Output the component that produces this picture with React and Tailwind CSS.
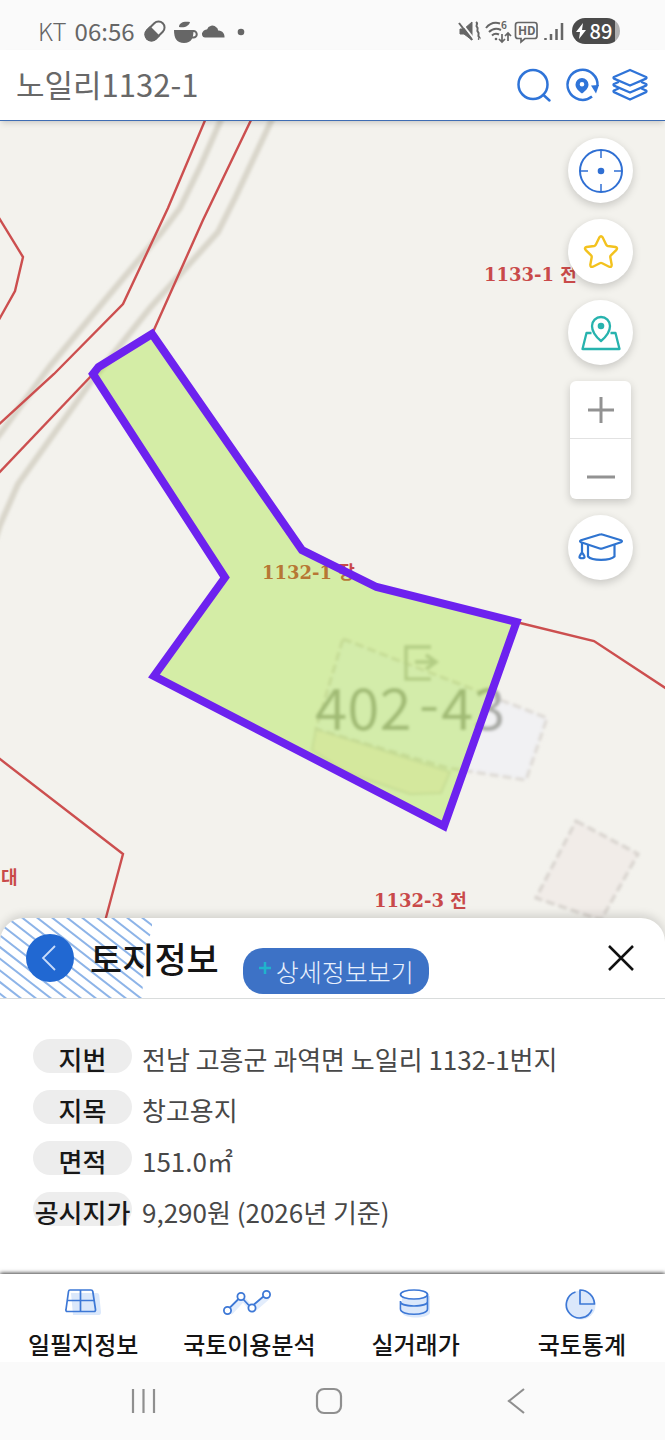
import React from "react";

const LAND_INFO = [
  { label: "지번", value: "전남 고흥군 과역면 노일리 1132-1번지" },
  { label: "지목", value: "창고용지" },
  { label: "면적", value: "151.0㎡" },
  { label: "공시지가", value: "9,290원 (2026년 기준)" },
];

const STRIPES = Array.from({ length: 17 }, (_, i) => -100 + i * 15);

function StatusBar() {
  return (
    <div className="flex h-[50px] items-end justify-between bg-[#fafafa] pr-[45px] pb-px pl-[38px] text-[#666]">
      <div className="flex h-9 items-center gap-2 text-2xl leading-9">
        <span className="font-light">KT</span>
        <span className="font-normal">06:56</span>
        <svg viewBox="0 0 106 26" className="h-[26px] w-[106px]" fill="none" aria-hidden="true">
          <g transform="rotate(-45 12 13)">
            <rect x="1" y="7" width="22" height="12" rx="6" stroke="currentColor" strokeWidth="2" />
            <path d="M12 6H7a7 7 0 0 0 0 14h5z" fill="currentColor" />
          </g>
          <path d="M31 12h19.500c0 8-2 13-9.500 13s-10-5-10-13z" fill="currentColor" />
          <path d="M48 13h2.500a2.500 2.500 0 0 1 0 6.500H46" stroke="currentColor" strokeWidth="2" />
          <path d="M36 9c0-4 4-6 11-5-1 4-5 6-11 5z" fill="currentColor" />
          <path d="M62 19.500a3.500 3.500 0 0 1-2-6c1-1.500 3-2 4-2a5.500 5.500 0 0 1 9.500-2c1 .5 1.500 2 1.500 3 4-.5 7 3.500 6.500 7z" fill="currentColor" />
          <circle cx="98" cy="14" r="3.300" fill="currentColor" />
        </svg>
      </div>
      <div className="flex h-9 items-center gap-2">
        <svg viewBox="0 0 106 26" className="h-[26px] w-[106px]" fill="none" stroke="currentColor" strokeWidth="2" aria-hidden="true">
          <path d="M2 11h4l8-7v18l-8-6H2z" fill="currentColor" strokeWidth="1" />
          <path d="M2 3l14 18" stroke="#fafafa" strokeWidth="2" />
          <path d="M1 5l13 17" />
          <path d="M18 4c3 2-1 3 1 5s-1 3 1 5-1 3 1 5-1 2 0 2" />
          <path d="M28 10c4-5 9-6 14-4.500M31 14c4-4 8-4 12-2M34 17.500c2-2 5-2 7-1" />
          <circle cx="38" cy="21" r="1.300" fill="currentColor" stroke="none" />
          <path d="M44 16v8m-3-3 3 3 3-3M50 23v-8m-3 3 3-3 3 3" strokeWidth="1.700" />
          <path d="M60 4.500h16.500q2.500 0 2.500 2.500v11q0 2.500-2.500 2.500H67l-4 3.500v-3.500h-3q-2.500 0-2.500-2.500V7q0-2.500 2.500-2.500z" strokeWidth="1.700" />
          <path d="M87.500 22v-2M93 22v-6M98.500 22V11M104 22V5" strokeWidth="2.500" />
          <text x="43" y="11" fontSize="10" fontWeight="700" fill="currentColor" stroke="none">6</text>
          <text x="60" y="17" fontSize="12" fontWeight="700" fill="currentColor" stroke="none">HD</text>
        </svg>
        <div className="flex h-[26px] w-12 items-center justify-center gap-1 rounded-full bg-[linear-gradient(90deg,#4a4a4a_43px,#b0b0b0_43px)] pr-1 text-xl leading-6 font-medium text-white">
          <svg viewBox="0 0 10 16" className="h-4 w-2.5" fill="currentColor" aria-hidden="true">
            <path d="M7 0L0 9h4l-1 7 7-9H6z" />
          </svg>
          <span>89</span>
        </div>
      </div>
    </div>
  );
}

function SearchBar() {
  return (
    <form className="relative z-10 flex h-[71px] items-center gap-3 border-b border-[#3e6db3] bg-white pr-[17px] pl-4 shadow-md" onSubmit={(e) => e.preventDefault()}>
      <input
        type="text"
        aria-label="주소 검색"
        defaultValue="노일리1132-1"
        className="h-12 min-w-0 flex-1 bg-transparent pb-1 text-[31px] font-normal text-[#686868] outline-none"
      />
      <button type="submit" aria-label="검색" className="text-[#2f74d8]">
        <svg viewBox="0 0 36 36" className="size-9" fill="none" stroke="currentColor" strokeWidth="2.500" strokeLinecap="round">
          <circle cx="17" cy="17.500" r="14.500" />
          <path d="M27.500 28l6 5.500" />
        </svg>
      </button>
      <button type="button" aria-label="위치 새로고침" className="text-[#2f74d8]">
        <svg viewBox="0 0 36 36" className="size-9" fill="none" stroke="currentColor" strokeWidth="2.500">
          <path d="M28 29.500A15 15 0 1 1 33.500 19" />
          <path d="M27 18.500l8-.5-3 8.500z" fill="currentColor" stroke="none" />
          <path fillRule="evenodd" d="M18 26.500c-4-3-6.500-5.500-6.500-9a6.500 6.500 0 0 1 13 0c0 3.500-2.500 6-6.500 9zm0-7a2.300 2.300 0 1 0 0-4.600 2.300 2.300 0 0 0 0 4.600z" fill="currentColor" stroke="none" />
        </svg>
      </button>
      <button type="button" aria-label="지도 레이어" className="text-[#2f74d8]">
        <svg viewBox="0 0 36 36" className="size-9" fill="none" stroke="currentColor" strokeWidth="2.300" strokeLinejoin="round" strokeLinecap="round">
          <path d="M18 3L34 10q1 .8 0 1.600L18 18.500 2 11.600q-1-.8 0-1.600z" />
          <path d="M6 15.200L2 17q-1 .8 0 1.600L18 25.500l16-6.900q1-.8 0-1.600l-4-1.800" />
          <path d="M6 21.700L2 23.500q-1 .8 0 1.600L18 32.500l16-7.400q1-.8 0-1.600l-4-1.800" />
        </svg>
      </button>
    </form>
  );
}

function MapCanvas() {
  return (
    <svg
      viewBox="0 121 665 821"
      preserveAspectRatio="xMidYMin slice"
      className="block h-full w-full"
      role="img"
      aria-label="노일리 1132-1 지적도"
      fill="none"
    >
      <defs>
        <filter id="soft" x="-10%" y="-10%" width="120%" height="120%">
          <feGaussianBlur stdDeviation="1.500" />
        </filter>
      </defs>
      <rect y="100" width="665" height="860" fill="#f3f2ed" />
      <g stroke="#d9d6cb" strokeWidth="6" filter="url(#soft)">
        <path d="M223 115L201 165 180 208 162 232 100 306 50 366 0 434-10 446" />
        <path d="M274 115L236 196 218 232 150 308 93 379 18 484 0 525-5 540" />
      </g>
      <g filter="url(#soft)">
        <path d="M316 729L312 750 345 772 410 794 441 793 450 772z" fill="#f3ebe0" stroke="#dedad2" strokeWidth="2" />
        <path d="M343 639L547 718 526 780 448 768 316 729z" fill="#f1f1f3" stroke="#dcd8d3" strokeWidth="3" strokeDasharray="9 4" />
        <path d="M576 821L638 854 601 920 536 898z" fill="#f1ece8" stroke="#d6d1cc" strokeWidth="3" strokeDasharray="9 4" />
        <path d="M431 647H406V679H431M415 662H436M426 655L436 662 426 669" stroke="#c2c4bc" strokeWidth="3.500" />
        <g fill="#a9aaa6" fontSize="58" fontWeight="400">
          <text x="315" y="730">402</text>
          <text x="419" y="725">-</text>
          <text x="441" y="730">43</text>
        </g>
      </g>
      <g stroke="#cc4f4f" strokeWidth="2.400">
        <path d="M206 118L168 208 123 304 54 374-4 427" />
        <path d="M252 118L203 220 153 332" />
        <path d="M93 374L-4 476" />
        <path d="M-4 213L23 257 15 291-4 325" />
        <path d="M516 622L594 641 670 691" />
        <path d="M-4 756L123 854 104 925" />
      </g>
      <g fill="#c94a4a" fontSize="18" fontWeight="700" className="font-['DejaVu_Serif','Noto_Sans_CJK_KR',serif]">
        <text x="484" y="281">1133-1 전</text>
        <text x="262" y="579">1132-1 장</text>
        <text x="374" y="907">1132-3 전</text>
        <text x="1" y="884">대</text>
      </g>
      <path
        d="M152 334L98.500 367 93 374 225 577.500 154 676 444 826 516.500 622 376.500 587 302 550z"
        fill="#90e103"
        fillOpacity="0.3"
      />
      <path
        d="M152 334L98.500 367 93 374 225 577.500 154 676 444 826 516.500 622 376.500 587 302 550z"
        stroke="#6d22ef"
        strokeWidth="8"
      />
    </svg>
  );
}

function RoundButton({ label, children }) {
  return (
    <button
      type="button"
      aria-label={label}
      className="flex size-[65px] items-center justify-center rounded-full bg-white shadow-[0_3px_8px_rgba(0,0,0,0.18)]"
    >
      {children}
    </button>
  );
}

function MapControls() {
  return (
    <div className="absolute top-[17px] right-8 flex flex-col items-center gap-4">
      <RoundButton label="현재 위치">
        <svg viewBox="0 0 48 48" className="size-12" fill="none" stroke="#2f6fd3" strokeWidth="2">
          <circle cx="24" cy="24" r="21" />
          <path d="M24 3v8M24 37v8M3 24h8M37 24h8" strokeWidth="1.500" />
          <circle cx="24" cy="24" r="3.300" fill="#2f6fd3" stroke="none" />
        </svg>
      </RoundButton>
      <RoundButton label="즐겨찾기">
        <svg viewBox="0 0 36 36" className="size-9" fill="none" stroke="#f3c21e" strokeWidth="2.400" strokeLinejoin="round">
          <path d="M16.300 3.500q1.700-2.500 3.400 0l3.500 7.300q.5 1 1.600 1.200l7.700 1q2.500.7.900 2.800l-5.500 5.600q-.8.800-.6 1.900l1.400 7.500q0 2.800-2.600 1.900l-6.900-3.500q-1.200-.6-2.400 0l-6.900 3.500q-2.600.9-2.600-1.900l1.400-7.500q.2-1.100-.6-1.900l-5.500-5.600q-1.600-2.100.9-2.800l7.700-1q1.100-.2 1.600-1.200z" />
        </svg>
      </RoundButton>
      <RoundButton label="지도 보기">
        <svg viewBox="0 0 42 38" className="h-[38px] w-[42px]" fill="none" stroke="#27b3ae" strokeWidth="2.300" strokeLinejoin="round">
          <path d="M21 27c-6-5-9-10-9-15a9 9 0 0 1 18 0c0 5-3 10-9 15z" />
          <circle cx="21" cy="12" r="3.300" fill="#27b3ae" stroke="none" />
          <path d="M11.500 19H6.500L2.500 35h37l-4-16h-5" />
        </svg>
      </RoundButton>
      <div className="flex h-[118px] w-[61px] flex-col overflow-hidden rounded-md bg-white text-[#929292] shadow-[0_3px_8px_rgba(0,0,0,0.18)]">
        <button type="button" aria-label="확대" className="flex h-[58px] items-center justify-center border-b border-[#e2e2e2]">
          <svg viewBox="0 0 28 28" className="size-7" stroke="currentColor" strokeWidth="3">
            <path d="M14 1v26M1 14h26" />
          </svg>
        </button>
        <button type="button" aria-label="축소" className="flex h-[60px] items-center justify-center pt-4">
          <svg viewBox="0 0 28 28" className="size-7" stroke="currentColor" strokeWidth="3">
            <path d="M0 14h28" />
          </svg>
        </button>
      </div>
      <RoundButton label="도움말">
        <svg viewBox="0 0 48 32" className="h-8 w-12" fill="none" stroke="#2f74d0" strokeWidth="2.200" strokeLinejoin="round">
          <path d="M24 2.500q.6-.3 1.200 0L44 8.200q2 1 0 2L25.200 16.500q-1.200.4-2.400 0L4 10.200q-2-1 0-2L22.800 2.500z" />
          <path d="M11 13v11.500c4 4.500 22 4.500 26.500 0V13" />
          <path d="M5 11v10M5 20.500q-3 4-2.500 5 2.500 1.500 5 0 .5-1-2.500-5z" />
        </svg>
      </RoundButton>
    </div>
  );
}

function LandSheet() {
  return (
    <section className="relative z-10 -mt-6 rounded-t-3xl bg-white shadow-[0_-3px_10px_rgba(0,0,0,0.14)]">
      <header className="relative flex h-[81px] items-center overflow-hidden rounded-t-3xl border-b border-[#d9dcdc] px-[26px]">
        <svg viewBox="0 0 152 80" className="absolute top-0 left-0 h-20 w-[152px]" aria-hidden="true">
          <defs>
            <clipPath id="stripe-area">
              <path d="M0 0H152V14Q144 26 144 50L142 80H0z" />
            </clipPath>
          </defs>
          <g clipPath="url(#stripe-area)" stroke="#8db4e8" strokeWidth="2">
            {STRIPES.map((x) => (
              <path key={x} d={`M${x} -2l108 84`} />
            ))}
          </g>
        </svg>
        <button type="button" aria-label="뒤로" className="relative flex size-12 shrink-0 items-center justify-center rounded-full bg-[#2168d2]">
          <svg viewBox="0 0 20 28" className="h-7 w-5" fill="none" stroke="#c9dcfa" strokeWidth="1.800">
            <path d="M15 2L3 14l12 12" />
          </svg>
        </button>
        <h1 className="relative ml-4 text-[35px] leading-[48px] font-medium whitespace-nowrap text-[#151515]">토지정보</h1>
        <button
          type="button"
          className="mb-1 ml-6 flex h-[46px] w-[186px] shrink-0 items-center justify-center gap-1 self-end rounded-[20px] bg-[#3d72c6] text-[25px] leading-9 font-light whitespace-nowrap text-[#e9f1fd]"
        >
          <svg viewBox="0 0 14 22" className="h-[22px] w-3.5" stroke="#20b4cc" strokeWidth="2.500" aria-hidden="true">
            <path d="M7 2v12M1 8h12" />
          </svg>
          상세정보보기
        </button>
        <button type="button" aria-label="닫기" className="ml-auto flex size-9 items-center justify-center">
          <svg viewBox="0 0 28 28" className="size-7" stroke="#111" strokeWidth="2.500">
            <path d="M2 2l24 24M26 2L2 26" />
          </svg>
        </button>
      </header>
      <dl className="flex flex-col gap-[17px] px-[33px] pt-10 pb-12">
        {LAND_INFO.map(({ label, value }) => (
          <div key={label} className="flex h-[34px] gap-2.5">
            <dt className="flex h-[34px] w-[99px] shrink-0 justify-center rounded-full bg-[#ededed] text-[26px] leading-[40px] font-medium whitespace-nowrap text-[#181818]">
              {label}
            </dt>
            <dd className="text-[26px] leading-[40px] font-normal whitespace-nowrap text-[#484848]">{value}</dd>
          </div>
        ))}
      </dl>
    </section>
  );
}

const TABS = [
  {
    label: "일필지정보",
    icon: (
      <>
        <path d="M14 9h26q2 0 2.200 2L44 28q0 3-2 3H16z" fill="#dbe8fb" />
        <g stroke="#3d78d6" strokeWidth="1.700" strokeLinejoin="round">
          <path d="M13 6h21q1.500 0 1.800 1.500L38.500 25.500q.2 2-1.500 2h-26.500q-2 0-1.500-2l2.500-18Q11.700 6 13 6z" />
          <path d="M23.500 6v21M10.500 16.500h27" />
        </g>
      </>
    ),
  },
  {
    label: "국토이용분석",
    icon: (
      <>
        <path d="M7 29l13-14 10 11 15-13" stroke="#e3edfc" strokeWidth="5" strokeLinejoin="round" />
        <g stroke="#3d78d6" strokeWidth="1.800">
          <path d="M7 23.500l9-9M20 15l6 6.500M31 20.500l10-8.500" />
          <circle cx="4.500" cy="26.500" r="3.600" fill="#fff" />
          <circle cx="18" cy="12.500" r="3.600" fill="#fff" />
          <circle cx="29" cy="24" r="3.600" fill="#fff" />
          <circle cx="43.500" cy="10.500" r="3.600" fill="#fff" />
        </g>
      </>
    ),
  },
  {
    label: "실거래가",
    icon: (
      <>
        <path d="M12 12h28v17c-3 6-25 6-28 0z" fill="#dbe8fb" />
        <g stroke="#3d78d6" strokeWidth="1.700">
          <ellipse cx="24" cy="10.500" rx="13.500" ry="4.500" fill="#fff" />
          <path d="M37.500 10.500V25c0 7-27 7-27 0v-8M10.500 17.500c0 6 27 6 27 0" />
        </g>
      </>
    ),
  },
  {
    label: "국토통계",
    icon: (
      <>
        <circle cx="25" cy="21" r="14.500" fill="#dbe8fb" />
        <g stroke="#3d78d6" strokeWidth="1.700" strokeLinejoin="round">
          <path d="M24 6v14h14.500A14.500 14.500 0 0 0 24 6z" />
          <path d="M19.500 8A13.300 13.300 0 1 0 36 25.500" />
        </g>
      </>
    ),
  },
];

function TabBar() {
  return (
    <nav className="relative z-20 grid h-[88px] grid-cols-4 bg-white shadow-[0_-1px_4px_rgba(0,0,0,0.75)]">
      {TABS.map(({ label, icon }) => (
        <a key={label} href="#" className="flex flex-col items-center gap-1 pt-2.5 text-2xl leading-10 font-medium whitespace-nowrap text-[#141414]">
          <svg viewBox="0 0 52 36" className="h-9 w-[52px]" fill="none" aria-hidden="true">
            {icon}
          </svg>
          {label}
        </a>
      ))}
    </nav>
  );
}

function SystemNav() {
  return (
    <div className="relative z-20 flex h-[78px] items-center justify-between bg-[#fafafa] pr-[136px] pl-[129px] text-[#8f8f8f]">
      <button type="button" aria-label="최근 앱">
        <svg viewBox="0 0 30 28" className="h-7 w-[30px]" stroke="currentColor" strokeWidth="2.200">
          <path d="M4 2v24M14.500 2v24M25 2v24" />
        </svg>
      </button>
      <button type="button" aria-label="홈">
        <svg viewBox="0 0 30 28" className="h-7 w-[30px]" fill="none" stroke="currentColor" strokeWidth="2.200">
          <rect x="3" y="2" width="24" height="24" rx="7" />
        </svg>
      </button>
      <button type="button" aria-label="이전">
        <svg viewBox="0 0 30 28" className="h-7 w-[30px]" fill="none" stroke="currentColor" strokeWidth="2.200">
          <path d="M25 2L10 14l15 12" />
        </svg>
      </button>
    </div>
  );
}

export default function App() {
  return (
    <main className="min-h-screen overflow-hidden bg-white font-['Noto_Sans_CJK_KR',sans-serif]">
      <StatusBar />
      <SearchBar />
      <div className="relative h-[821px] overflow-hidden bg-[#f3f2ed]">
        <MapCanvas />
        <MapControls />
      </div>
      <LandSheet />
      <TabBar />
      <SystemNav />
    </main>
  );
}
